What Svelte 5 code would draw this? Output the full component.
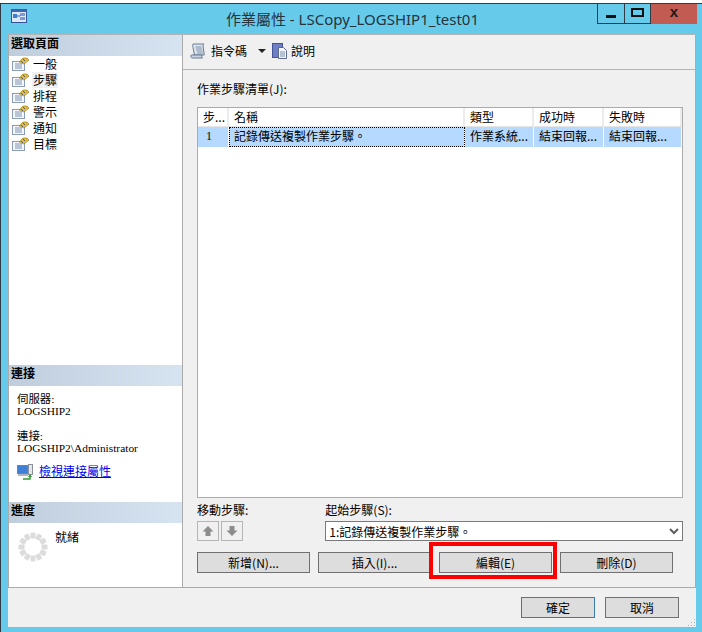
<script lang="ts">
  const pages = ['一般', '步驟', '排程', '警示', '通知', '目標'];
  const selectedPage = '步驟';
  const columns = ['步...', '名稱', '類型', '成功時', '失敗時'];
  const step = ['1', '記錄傳送複製作業步驟。', '作業系統...', '結束回報...', '結束回報...'];
  const dots = Array.from({ length: 12 }, (_, i) => i * 30);
</script>

{#snippet pageIcon()}
  <svg class="page-icon" width="17" height="14" viewBox="0 0 17 14">
    <rect x="0.5" y="4.5" width="12" height="9" fill="#f4f7fb" stroke="#8a9bb5" />
    <path d="M3 7h7M3 9h7M3 11h7" stroke="#7f93b3" />
    <path d="M7 5 11 1h4l2 2-5 4z" fill="#e8b92f" stroke="#8f7a2a" stroke-width="0.6" />
    <path d="M9 4l2 2M11 2l2 2" stroke="#55606e" />
  </svg>
{/snippet}

<div class="window">
  <div class="frame">
    <header class="titlebar">
      <svg class="app-icon" width="16" height="14" viewBox="0 0 16 14">
        <rect x="0.5" y="0.5" width="15" height="13" fill="#dfe8f7" stroke="#33539b" />
        <rect x="0.5" y="0.5" width="15" height="2.5" fill="#3f66b8" />
        <rect x="2" y="5" width="4" height="4" fill="#3f7fd0" />
        <rect x="9" y="4" width="5" height="3" fill="#7d9ad6" />
        <rect x="9" y="8" width="5" height="3" fill="#7d9ad6" />
        <path d="M6 7h3" stroke="#33539b" />
      </svg>
      <div class="title">作業屬性 - LSCopy_LOGSHIP1_test01</div>
      <div class="controls">
        <button class="ctl min" aria-label="最小化"><span></span></button>
        <button class="ctl max" aria-label="最大化"><span></span></button>
        <button class="ctl close">x</button>
      </div>
    </header>

    <div class="client">
      <div class="panes">
        <aside class="sidebar">
          <h2>選取頁面</h2>
          <ul class="pages">
            {#each pages as page}
              <li>
                {@render pageIcon()}
                <span class:selected={page === selectedPage}>{page}</span>
              </li>
            {/each}
          </ul>

          <h2>連接</h2>
          <div class="conn">
            <p>伺服器:<br />LOGSHIP2</p>
            <p class="conn-user">連接:<br />LOGSHIP2\Administrator</p>
            <div class="conn-link">
              <svg width="16" height="16" viewBox="0 0 16 16">
                <rect x="0.5" y="1.5" width="10" height="8" fill="#3f7fd6" stroke="#76808f" />
                <rect x="11.5" y="0.5" width="4" height="10" fill="#e4e7ee" stroke="#8a8f9a" />
                <path d="M1 10h10v2H1z" fill="#aeb4c0" />
                <path d="M6 15h7v-3" fill="none" stroke="#2f9b2f" stroke-width="1.4" />
                <path d="M11 13l2-3 2 3z" fill="#2f9b2f" />
              </svg>
              <a href="#conn">檢視連接屬性</a>
            </div>
          </div>

          <h2>進度</h2>
          <div class="progress">
            <svg width="30" height="30" viewBox="0 0 30 30">
              {#each dots as angle}
                <rect x="12.5" y="0.5" width="5" height="6" rx="1" fill="#dcdcdc" transform="rotate({angle} 15 15)" />
              {/each}
            </svg>
            <span>就緒</span>
          </div>
        </aside>

        <main class="main">
          <div class="toolbar">
            <svg width="16" height="16" viewBox="0 0 16 16">
              <path d="M3 1h11c-1 1-1 2-.7 4l1 7H4.500L3 4.500C2.700 3 2.500 2 3 1z" fill="#dde5f0" stroke="#66788f" />
              <path d="M1.500 12h10.500c-.5 1-.5 2 .5 3H2.500C.5 15 .5 12 1.500 12z" fill="#c9d5e6" stroke="#66788f" />
              <path d="M5.500 4h6M6 6h6M6.500 8h6M7 10h6" stroke="#7f92ad" />
            </svg>
            <span class="tool first">指令碼</span>
            <span class="caret"></span>
            <svg width="16" height="16" viewBox="0 0 16 16">
              <rect x="0.5" y="0.5" width="10" height="14" fill="#6f7fc4" stroke="#45539a" />
              <path d="M6.500 4.500h5l3 3v8h-8z" fill="#f4f6fb" stroke="#5d6a8c" />
              <path d="M8 9h5M8 11h5M8 13h5" stroke="#7d8bab" />
            </svg>
            <span class="tool">說明</span>
          </div>

          <div class="content">
            <div class="list-label">作業步驟清單(J):</div>
            <div class="list">
              <div class="row head">
                {#each columns as col}
                  <div class="cell">{col}</div>
                {/each}
              </div>
              <div class="row body">
                {#each step as value, i}
                  <div class="cell" class:focus={i === 1}>{value}</div>
                {/each}
              </div>
            </div>

            <div class="step-controls">
              <div class="move">
                <div class="field-label">移動步驟:</div>
                <div class="arrows">
                  <button class="arrow" aria-label="上移">
                    <svg width="12" height="12" viewBox="0 0 12 12"><path d="M6 1l5.500 5.500H8.500V11h-5V6.500H.5z" fill="#8c8c8c" /></svg>
                  </button>
                  <button class="arrow" aria-label="下移">
                    <svg width="12" height="12" viewBox="0 0 12 12"><path d="M6 11l5.500-5.500H8.500V1h-5v4.500H.5z" fill="#8c8c8c" /></svg>
                  </button>
                </div>
              </div>
              <div class="start">
                <div class="field-label">起始步驟(S):</div>
                <div class="combo">
                  <span>1:記錄傳送複製作業步驟。</span>
                  <svg width="10" height="7" viewBox="0 0 10 7"><path d="M1 1l4 4 4-4" fill="none" stroke="#606060" stroke-width="2" /></svg>
                </div>
              </div>
            </div>

            <div class="actions">
              <button class="btn">新增(N)...</button>
              <button class="btn">插入(I)...</button>
              <div class="marked">
                <button class="btn">編輯(E)</button>
                <div class="redbox"></div>
              </div>
              <button class="btn">刪除(D)</button>
            </div>
          </div>
        </main>
      </div>

      <footer class="footer">
        <button class="btn ok">確定</button>
        <button class="btn cancel">取消</button>
        <svg class="grip" width="9" height="9" viewBox="0 0 9 9">
          <path d="M7 1h1v1H7zM4 4h1v1H4zM7 4h1v1H7zM1 7h1v1H1zM4 7h1v1H4zM7 7h1v1H7z" fill="#b5b5b5" />
        </svg>
      </footer>
    </div>
  </div>
</div>

<style>
  :global(body) {
    margin: 0;
    background: #fff;
  }

  .window {
    width: 702px;
    height: 632px;
    box-sizing: border-box;
    padding-top: 3px;
    display: flex;
    flex-direction: column;
    font-family: 'Liberation Serif', 'Noto Sans CJK TC', serif;
    font-size: 12px;
    color: #000;
  }

  .frame {
    flex: 1;
    min-height: 0;
    display: flex;
    flex-direction: column;
    border-left: 1px solid #2f3b44;
  }

  button {
    font: inherit;
    color: inherit;
    padding: 0;
    margin: 0;
  }

  .titlebar {
    height: 31px;
    flex: none;
    box-sizing: border-box;
    background: #66cbea;
    border-top: 1px solid #2f3b44;
    display: flex;
    align-items: flex-start;
  }

  .app-icon {
    margin: 5px 0 0 10px;
    flex: none;
  }

  .title {
    flex: 1;
    text-align: center;
    font-family: 'Noto Sans', 'Noto Sans CJK TC', sans-serif;
    font-size: 15px;
    line-height: 20px;
    margin-top: 5px;
    margin-left: 81px;
    color: #26333d;
    white-space: nowrap;
  }

  .controls {
    display: flex;
    flex: none;
    width: 100px;
    height: 21px;
    margin-right: 5px;
    margin-top: -1px;
  }

  .ctl {
    height: 21px;
    box-sizing: border-box;
    background: #66cbea;
    border: 1px solid #2f3b44;
    border-left: 0;
    display: flex;
    align-items: center;
    justify-content: center;
  }

  .min {
    width: 28px;
    border-left: 1px solid #2f3b44;
  }

  .min span {
    width: 10px;
    height: 3px;
    background: #111;
    margin-top: 6px;
  }

  .max {
    width: 26px;
  }

  .max span {
    width: 9px;
    height: 5px;
    border: 2px solid #111;
    margin-top: -3px;
  }

  .close {
    width: 46px;
    background: #c25b52;
    border: 0;
    border-top: 1px solid #2f3b44;
    font-family: 'Liberation Sans', sans-serif;
    font-weight: 700;
    font-size: 15px;
    line-height: 12px;
    padding-bottom: 5px;
    color: #1a1a1a;
  }

  .client {
    flex: 1;
    min-height: 0;
    background: #f0f0f0;
    display: flex;
    flex-direction: column;
    border: solid #66cbea;
    border-width: 0 6px 5px 7px;
  }

  .panes {
    flex: 1;
    min-height: 0;
    display: flex;
    border-top: 1px solid #b4b4b4;
    border-left: 1px solid #ababab;
    border-bottom: 1px solid #ababab;
  }

  .sidebar {
    width: 173px;
    flex: none;
    background: #fff;
    border-right: 1px solid #ababab;
    display: flex;
    flex-direction: column;
  }

  h2 {
    margin: 0;
    height: 21px;
    padding-left: 2px;
    background: linear-gradient(to right, #bfcddc, #d6e4f2);
    font-size: 12px;
    line-height: 16px;
    font-weight: 700;
    font-family: 'Noto Sans CJK TC', sans-serif;
    flex: none;
  }

  .pages {
    list-style: none;
    margin: 0;
    padding: 0 0 0 3px;
    height: 309px;
    flex: none;
    box-sizing: border-box;
  }

  .pages li {
    height: 16px;
    display: flex;
    align-items: center;
    gap: 3px;
    line-height: 16px;
    font-family: 'Noto Sans CJK TC', sans-serif;
  }

  .page-icon {
    flex: none;
  }

  .pages span {
    padding: 0 1px;
  }

  .pages .selected {
    background: #f0f0f0;
  }

  .conn {
    height: 116px;
    flex: none;
    box-sizing: border-box;
    padding: 7px 0 0 8px;
    line-height: 12px;
  }

  .conn p {
    margin: 0 0 13px;
    font-size: 11.4px;
  }

  .conn .conn-user {
    margin-bottom: 10px;
  }

  .conn-link {
    display: flex;
    align-items: center;
    gap: 6px;
  }

  a {
    color: #0000ee;
    text-decoration: underline;
  }

  .progress {
    flex: 1;
    display: flex;
    align-items: flex-start;
    gap: 7px;
    padding: 9px 0 0 9px;
  }

  .progress span {
    margin-top: -2px;
    line-height: 16px;
  }

  .main {
    flex: 1;
    min-width: 0;
    display: flex;
    flex-direction: column;
    border-right: 1px solid #ababab;
  }

  .toolbar {
    height: 35px;
    flex: none;
    box-sizing: border-box;
    border-bottom: 1px solid #b4b4b4;
    display: flex;
    align-items: center;
    padding: 0 0 3px 7px;
    gap: 3px;
  }

  .tool {
    font-family: 'Noto Sans CJK TC', sans-serif;
  }

  .first {
    margin-left: 2px;
  }

  .caret {
    width: 0;
    height: 0;
    border: 4px solid transparent;
    border-top: 4px solid #222;
    border-bottom: 0;
    margin: 0 3px 0 8px;
  }

  .content {
    flex: 1;
    min-height: 0;
    display: flex;
    flex-direction: column;
    padding: 11px 12px 13px 14px;
  }

  .list-label {
    line-height: 16px;
    margin-bottom: 10px;
    font-family: 'Noto Sans CJK TC', sans-serif;
  }

  .list {
    height: 391px;
    flex: none;
    box-sizing: border-box;
    background: #fff;
    border: 1px solid #ababab;
  }

  .row {
    display: grid;
    grid-template-columns: 31px 236px 69px 70px 78px;
    height: 20px;
    line-height: 18px;
    font-family: 'Noto Sans CJK TC', sans-serif;
  }

  .head {
    height: 18px;
    border-bottom: 1px solid #e5e5e5;
    box-sizing: content-box;
  }

  .head .cell {
    padding-left: 5px;
    border-right: 2px solid #ececec;
    overflow: hidden;
    white-space: nowrap;
  }

  .body .cell {
    background: #b5d9ff;
    padding-left: 5px;
    border-right: 1px solid #fff;
    white-space: nowrap;
    overflow: hidden;
  }

  .body .cell:first-child {
    font-family: 'Liberation Serif', serif;
    padding-left: 8px;
  }

  .body .focus {
    outline: 1px dotted #000;
    outline-offset: -1px;
  }

  .step-controls {
    display: flex;
    gap: 77px;
    margin-top: 5px;
  }

  .field-label {
    line-height: 14px;
    margin-bottom: 4px;
    font-family: 'Noto Sans CJK TC', sans-serif;
  }

  .arrows {
    display: flex;
    gap: 2px;
  }

  .arrow {
    width: 22px;
    height: 20px;
    box-sizing: border-box;
    background: #f0f0f0;
    border: 1px solid #b4b4b4;
    display: flex;
    align-items: center;
    justify-content: center;
  }

  .start {
    flex: 1;
  }

  .combo {
    height: 20px;
    box-sizing: border-box;
    background: #fff;
    border: 1px solid #7a7a7a;
    display: flex;
    align-items: center;
    justify-content: space-between;
    padding: 0 3px;
    font-family: 'Noto Sans CJK TC', sans-serif;
  }

  .actions {
    display: flex;
    gap: 8px;
    margin-top: 11px;
  }

  .btn {
    width: 113px;
    height: 21px;
    box-sizing: border-box;
    background: #dddddd;
    border: 1px solid #707070;
    font-family: 'Noto Sans CJK TC', sans-serif;
    line-height: 17px;
  }

  .marked {
    position: relative;
    height: 21px;
  }

  .redbox {
    position: absolute;
    inset: -10px -5px -6px -10px;
    border: 4px solid #f00;
    pointer-events: none;
  }

  .footer {
    height: 39px;
    flex: none;
    box-sizing: border-box;
    display: flex;
    justify-content: flex-end;
    gap: 10px;
    padding: 9px 17px 0 0;
    position: relative;
  }

  .ok,
  .cancel {
    width: 74px;
  }

  .ok {
    border-color: #3d7ab0;
  }

  .grip {
    position: absolute;
    right: 0;
    bottom: 0;
  }
</style>
